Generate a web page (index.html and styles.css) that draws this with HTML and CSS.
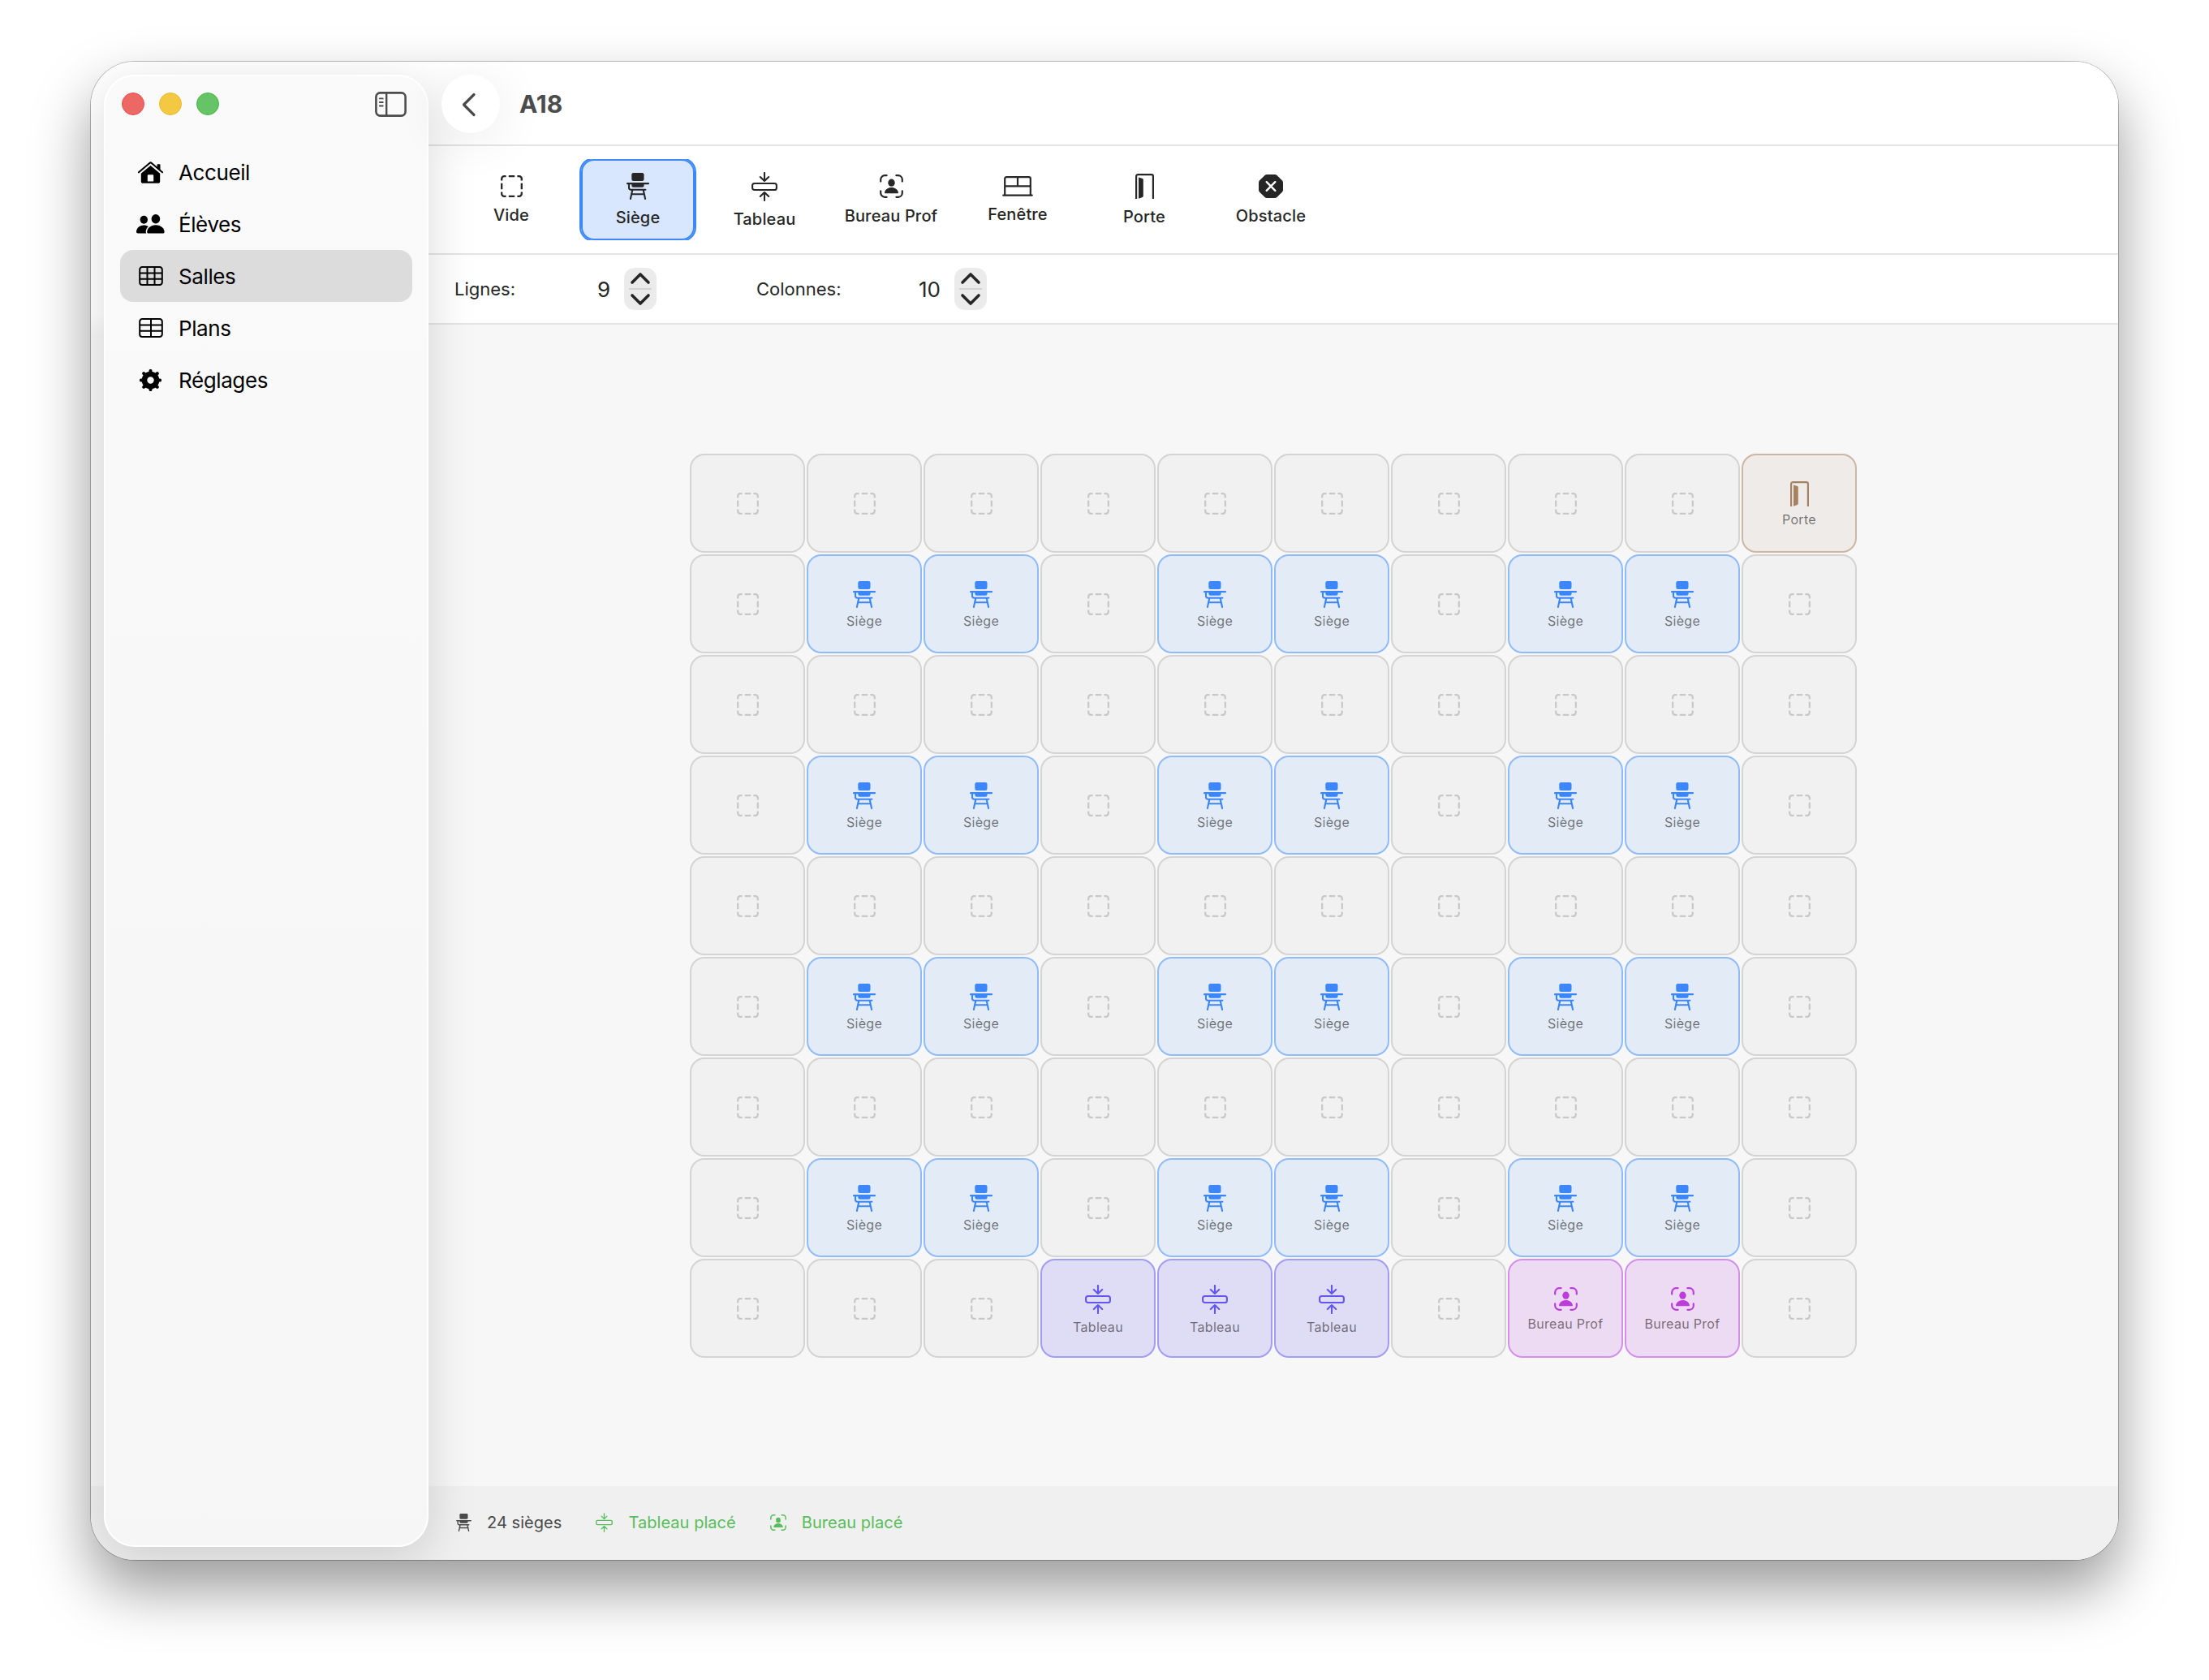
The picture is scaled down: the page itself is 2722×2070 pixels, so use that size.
FILE: index.html
```html
<!DOCTYPE html>
<html lang="fr">
<head>
    <meta charset="UTF-8">
    <meta name="viewport" content="width=device-width, initial-scale=1.0">
    <title>A18</title>
    <link rel="stylesheet" href="styles.css">
</head>
<body>
    <svg class="sprite" xmlns="http://www.w3.org/2000/svg">
        <symbol id="vide" viewBox="0 0 27 27">
            <path d="M1.2 6.6V4.2a3 3 0 0 1 3-3h2.4M20.4 1.2h2.4a3 3 0 0 1 3 3v2.4M25.8 20.4v2.4a3 3 0 0 1-3 3h-2.4M6.6 25.8H4.2a3 3 0 0 1-3-3v-2.4M9.8 1.2h7.4M9.8 25.8h7.4M1.2 9.8v7.4M25.8 9.8v7.4" fill="none" stroke="currentColor" stroke-width="2.3"/>
        </symbol>
        <symbol id="siege" viewBox="0 0 28 33">
            <rect x="6.3" y="0" width="15.2" height="10" rx="2.2"/>
            <path d="M1 12h26a1.1 1.1 0 0 1 0 2.3h-5.4v.9a2.5 2.5 0 0 1-2.5 2.5H8.8a2.5 2.5 0 0 1-2.5-2.5v-.9H1A1.1 1.1 0 0 1 1 12z"/>
            <path d="M3 13.5v5a2.2 2.2 0 0 0 2.2 2.2h18.2M7.3 21l-2.4 11M20.7 21l2.4 11M6.2 26.2h15.6" fill="none" stroke="currentColor" stroke-width="2.1" stroke-linecap="round"/>
        </symbol>
        <symbol id="tableau" viewBox="0 0 32 36">
            <path d="M16 1v9.6M10.8 6l5.2 5 5.2-5M16 35v-9.6M10.8 30l5.2-5 5.2 5" fill="none" stroke="currentColor" stroke-width="2.1" stroke-linecap="round" stroke-linejoin="round"/>
            <rect x="1.1" y="14" width="29.8" height="8" rx="2.6" fill="none" stroke="currentColor" stroke-width="2.1"/>
        </symbol>
        <symbol id="bureau" viewBox="0 0 29 29">
            <path d="M1.2 8.6V6.2a5 5 0 0 1 5-5h2.4M20.4 1.2h2.4a5 5 0 0 1 5 5v2.4M27.8 20.4v2.4a5 5 0 0 1-5 5h-2.4M8.6 27.8H6.2a5 5 0 0 1-5-5v-2.4" fill="none" stroke="currentColor" stroke-width="2.2" stroke-linecap="round"/>
            <ellipse cx="14.5" cy="10.2" rx="4.2" ry="4.6"/>
            <path d="M7 23.2c-.8 0-1.1-.5-.9-1.3C6.8 18.6 10.2 16 14.5 16s7.7 2.6 8.4 5.9c.2.8-.1 1.3-.9 1.3z"/>
        </symbol>
        <symbol id="fenetre" viewBox="0 0 38 25">
            <path d="M3.2 23V3.2a2 2 0 0 1 2-2h27.6a2 2 0 0 1 2 2V23M3.2 12.4h31.6M19 1.2v11.2M1.2 23.6h35.6" fill="none" stroke="currentColor" stroke-width="2.2" stroke-linecap="round"/>
        </symbol>
        <symbol id="porte" viewBox="0 0 23 31">
            <path d="M1.1 31V3.1a2 2 0 0 1 2-2h16.8a2 2 0 0 1 2 2V31" fill="none" stroke="currentColor" stroke-width="2.2"/>
            <path d="M4 4.5l4.8 1.6a1.5 1.5 0 0 1 1 1.4v20a1.5 1.5 0 0 1-1 1.4L4 30.7z"/>
        </symbol>
        <symbol id="obstacle" viewBox="0 0 30 29">
            <path d="M10.2 0h9.6a4 4 0 0 1 2.7 1.1l6.3 6.1A4 4 0 0 1 30 10v9a4 4 0 0 1-1.2 2.8l-6.3 6.1a4 4 0 0 1-2.7 1.1h-9.6a4 4 0 0 1-2.7-1.1l-6.3-6.1A4 4 0 0 1 0 19v-9a4 4 0 0 1 1.2-2.8l6.3-6.1A4 4 0 0 1 10.2 0z"/>
            <path d="M9.7 9.2l10.6 10.6M20.3 9.2L9.7 19.8" stroke="#fff" stroke-width="2.4" stroke-linecap="round"/>
        </symbol>
        <symbol id="accueil" viewBox="0 0 31 27">
            <path d="M1 13.3L14.6 1.8a1.5 1.5 0 0 1 1.9 0L30 13.3" fill="none" stroke="currentColor" stroke-width="2.1" stroke-linecap="round"/>
            <path d="M24.4 3.2h2.3a.8.8 0 0 1 .8.8v6.8l-3.9-3.3V4a.8.8 0 0 1 .8-.8z"/>
            <path d="M15.5 4.9l11.7 9.9v9.4a2.6 2.6 0 0 1-2.6 2.6H6.4a2.6 2.6 0 0 1-2.6-2.6v-9.4zM12.6 16.2a.8.8 0 0 0-.8.8v7.6h7.4V17a.8.8 0 0 0-.8-.8z" fill-rule="evenodd"/>
        </symbol>
        <symbol id="eleves" viewBox="0 0 35 24">
            <ellipse cx="9.3" cy="6.8" rx="4.7" ry="5"/>
            <path d="M2 23.6c-1.4 0-2-.7-2-2 0-4.2 3.6-8.2 9.2-8.2 2.4 0 4.3.7 5.7 1.7-2.3 2-3.4 4.7-3.2 7 .1.6.3 1.1.7 1.5z"/>
            <ellipse cx="23.9" cy="5.7" rx="5.3" ry="5.7"/>
            <path d="M15.6 23.6c-1.7 0-2.4-.6-2.4-1.9 0-3.7 4.1-8.4 10.7-8.4s10.7 4.7 10.7 8.4c0 1.3-.7 1.9-2.4 1.9z"/>
        </symbol>
        <symbol id="salles" viewBox="0 0 30 24">
            <path d="M4.2 1.1h21.6a3 3 0 0 1 3 3v15.8a3 3 0 0 1-3 3H4.2a3 3 0 0 1-3-3V4.1a3 3 0 0 1 3-3zM1.2 8.5h27.6M1.2 15.7h27.6M10.5 1.1v21.8M19.5 1.1v21.8" fill="none" stroke="currentColor" stroke-width="2"/>
        </symbol>
        <symbol id="plans" viewBox="0 0 30 24">
            <path d="M4.2 1.1h21.6a3 3 0 0 1 3 3v15.8a3 3 0 0 1-3 3H4.2a3 3 0 0 1-3-3V4.1a3 3 0 0 1 3-3zM1.2 8.5h27.6M1.2 15.7h27.6M15 1.1v21.8" fill="none" stroke="currentColor" stroke-width="2"/>
        </symbol>
        <symbol id="reglages" viewBox="0 0 27 27">
            <circle cx="13.5" cy="13.5" r="7.5" fill="none" stroke="currentColor" stroke-width="6.6"/>
            <path d="M13.5 1.9v4M13.5 25.1v-4M1.9 13.5h4M25.1 13.5h-4M5.2 5.2L8 8M21.8 21.8L19 19M5.2 21.8L8 19M21.8 5.2L19 8" stroke="currentColor" stroke-width="4" stroke-linecap="round"/>
        </symbol>
        <symbol id="volet" viewBox="0 0 39 31">
            <rect x="1.4" y="1.4" width="36.2" height="28.2" rx="5" fill="none" stroke="currentColor" stroke-width="2.6"/>
            <path d="M14.2 1.4v28.2" stroke="currentColor" stroke-width="2.4"/>
            <path d="M5.8 8.4h4M5.8 13h4M5.8 17.5h4" stroke="currentColor" stroke-width="1.8" stroke-linecap="round"/>
        </symbol>
    </svg>

    <div class="window">
        <aside class="sidebar">
            <div class="titlebar">
                <span class="dot red"></span>
                <span class="dot yellow"></span>
                <span class="dot green"></span>
                <svg class="toggle"><use href="#volet"/></svg>
            </div>
            <nav class="menu">
                <a class="menu-item"><span class="menu-icon"><svg class="i-accueil"><use href="#accueil"/></svg></span>Accueil</a>
                <a class="menu-item"><span class="menu-icon"><svg class="i-eleves"><use href="#eleves"/></svg></span>Élèves</a>
                <a class="menu-item active"><span class="menu-icon"><svg class="i-table"><use href="#salles"/></svg></span>Salles</a>
                <a class="menu-item"><span class="menu-icon"><svg class="i-table"><use href="#plans"/></svg></span>Plans</a>
                <a class="menu-item"><span class="menu-icon"><svg class="i-reglages"><use href="#reglages"/></svg></span>Réglages</a>
            </nav>
        </aside>

        <main class="main">
            <header class="header">
                <button class="back" type="button">
                    <svg width="20" height="30" viewBox="0 0 20 30"><path d="M16 2.5L3.5 15 16 27.5" fill="none" stroke="currentColor" stroke-width="3.2" stroke-linecap="round" stroke-linejoin="round"/></svg>
                </button>
                <h1>A18</h1>
            </header>

            <div class="tools">
                <div class="tool"><svg class="i-vide"><use href="#vide"/></svg>Vide</div>
                <div class="tool selected"><svg class="i-siege"><use href="#siege"/></svg>Siège</div>
                <div class="tool"><svg class="i-tableau"><use href="#tableau"/></svg>Tableau</div>
                <div class="tool"><svg class="i-bureau"><use href="#bureau"/></svg>Bureau Prof</div>
                <div class="tool"><svg class="i-fenetre"><use href="#fenetre"/></svg>Fenêtre</div>
                <div class="tool"><svg class="i-porte"><use href="#porte"/></svg>Porte</div>
                <div class="tool"><svg class="i-obstacle"><use href="#obstacle"/></svg>Obstacle</div>
            </div>

            <div class="size">
                <div class="field lignes">
                    <span class="label">Lignes:</span>
                    <span class="value">9</span>
                    <div class="stepper">
                        <svg width="26" height="16" viewBox="0 0 26 16"><path d="M3 13L13 3l10 10"/></svg>
                        <svg width="26" height="16" viewBox="0 0 26 16"><path d="M3 3l10 10L23 3"/></svg>
                    </div>
                </div>
                <div class="field colonnes">
                    <span class="label">Colonnes:</span>
                    <span class="value">10</span>
                    <div class="stepper">
                        <svg width="26" height="16" viewBox="0 0 26 16"><path d="M3 13L13 3l10 10"/></svg>
                        <svg width="26" height="16" viewBox="0 0 26 16"><path d="M3 3l10 10L23 3"/></svg>
                    </div>
                </div>
            </div>

            <div class="room">
                <div class="grid" id="grid"></div>
            </div>

            <footer class="status">
                <span class="status-item"><svg class="s-siege"><use href="#siege"/></svg>24 sièges</span>
                <span class="status-item ok"><svg class="s-tableau"><use href="#tableau"/></svg>Tableau placé</span>
                <span class="status-item ok"><svg class="s-bureau"><use href="#bureau"/></svg>Bureau placé</span>
            </footer>
        </main>
    </div>

    <script src="script.js"></script>
</body>
</html>
```
FILE: styles.css
```css
* {
    box-sizing: border-box;
}
body {
    margin: 0;
    padding: 76px 112px 148px;
    height: 2070px;
    background: #fff;
    font-family: Inter, "Liberation Sans", sans-serif;
    color: #262626;
}
svg {
    display: block;
    flex: none;
    fill: currentColor;
}
.sprite {
    position: absolute;
    width: 0;
    height: 0;
}
.window {
    display: flex;
    height: 1846px;
    border-radius: 54px;
    overflow: clip;
    background: linear-gradient(#fff 310px, #f7f7f7 336px, #f7f7f7 1755px, #f0f0f0 1755px);
    box-shadow: 0 0 0 1px rgba(0, 0, 0, 0.25), 0 36px 72px rgba(0, 0, 0, 0.4);
}

/* sidebar */
.sidebar {
    position: relative;
    z-index: 1;
    width: 400px;
    margin: 16px 0 16px 16px;
    padding: 20px 18px;
    border: 2px solid #fff;
    border-radius: 38px;
    background: linear-gradient(#fafafa, #f9f9f9 20%, #f6f6f6);
    box-shadow: 0 14px 60px rgba(0, 0, 0, 0.15);
}
.titlebar {
    display: flex;
    align-items: center;
    gap: 18px;
    height: 28px;
    padding: 0 7px 0 2px;
}
.dot {
    width: 28px;
    height: 28px;
    border-radius: 50%;
    border: 1px solid;
}
.red {
    background: #ed6765;
    border-color: #e2504e;
}
.yellow {
    background: #f3c944;
    border-color: #e9b92c;
}
.green {
    background: #66c366;
    border-color: #4cb24e;
}
.toggle {
    width: 39px;
    height: 31px;
    margin-left: auto;
    color: #4c4c4c;
}
.menu {
    margin-top: 38px;
}
.menu-item {
    display: flex;
    align-items: center;
    height: 64px;
    padding-left: 14px;
    border-radius: 16px;
    font-size: 26px;
    letter-spacing: -0.4px;
    color: #000;
}
.menu-item.active {
    background: #dcdcdc;
}
.menu-icon {
    display: flex;
    justify-content: center;
    width: 47px;
    margin-right: 11px;
}
.i-accueil { width: 31px; height: 27px; }
.i-eleves { width: 35px; height: 24px; }
.i-table { width: 30px; height: 24px; }
.i-reglages { width: 27px; height: 27px; }

/* header */
.main {
    flex: 1;
    display: flex;
    flex-direction: column;
    background: linear-gradient(#fff 323px, #f7f7f7 323px, #f7f7f7 1755px, #f0f0f0 1755px);
}
.header {
    display: flex;
    align-items: center;
    height: 104px;
    padding: 2px 0 0 16px;
    border-bottom: 2px solid #e4e4e4;
}
.back {
    position: relative;
    z-index: 2;
    display: flex;
    align-items: center;
    justify-content: center;
    width: 72px;
    height: 72px;
    padding: 1px 4px 0 0;
    border: none;
    border-radius: 50%;
    background: #fff;
    color: #4a4a4a;
    box-shadow: 0 8px 64px rgba(0, 0, 0, 0.09);
}
h1 {
    margin: 0 0 0 24px;
    font-size: 30px;
    font-weight: 700;
    letter-spacing: -0.1px;
    color: #4c4c4c;
}

/* tools */
.tools {
    display: flex;
    gap: 16px;
    height: 134px;
    padding: 16px 32px;
    border-bottom: 2px solid #e4e4e4;
}
.tool {
    display: flex;
    flex-direction: column;
    align-items: center;
    justify-content: center;
    gap: 12px;
    width: 140px;
    height: 100px;
    border-radius: 16px;
    font-size: 20px;
    font-weight: 500;
    line-height: 21px;
    letter-spacing: 0.15px;
}
.tool.selected {
    background: #d8e6fe;
    box-shadow: 0 0 0 2px #3b88fa, inset 0 0 0 2px #3b88fa;
    clip-path: inset(0 -2px);
}
.i-vide { width: 27px; height: 27px; }
.i-siege { width: 28px; height: 33px; }
.i-tableau { width: 32px; height: 36px; }
.i-bureau { width: 29px; height: 29px; }
.i-fenetre { width: 38px; height: 25px; }
.i-porte { width: 23px; height: 31px; }
.i-obstacle { width: 30px; height: 29px; }

/* room size */
.size {
    display: flex;
    gap: 123px;
    height: 86px;
    padding-left: 32px;
    border-bottom: 2px solid #e4e4e4;
}
.field {
    display: flex;
    align-items: center;
}
.lignes {
    width: 249px;
}
.colonnes {
    width: 284px;
}
.label {
    font-size: 22px;
}
.value {
    margin-left: auto;
    font-size: 26px;
}
.stepper {
    display: flex;
    flex-direction: column;
    align-items: center;
    justify-content: space-between;
    width: 40px;
    height: 52px;
    margin-left: 17px;
    padding: 5px 0;
    border-radius: 13px;
    background: linear-gradient(#d4d4d4, #d4d4d4) center / 28px 2px no-repeat #ebebeb;
}
.stepper svg {
    fill: none;
    stroke: #262626;
    stroke-width: 3.6;
    stroke-linecap: round;
    stroke-linejoin: round;
}

/* room */
.room {
    flex: 1;
    display: flex;
    align-items: center;
    justify-content: center;
}
.grid {
    display: grid;
    grid-template-columns: repeat(10, 142px);
    grid-auto-rows: 122px;
    gap: 2px;
    margin-top: 1px;
}
.cell {
    display: flex;
    flex-direction: column;
    align-items: center;
    justify-content: center;
    gap: 9px;
    border: 2px solid #d4d4d4;
    border-radius: 18px;
    background: #f1f1f1;
    font-size: 16px;
    line-height: 14px;
    letter-spacing: 0.3px;
}
.cell span {
    color: rgba(0, 0, 0, 0.53);
}
.cell.vide {
    color: #c8c8c8;
}
.cell.siege {
    background: #e3ebf7;
    border-color: #8fbbfa;
    color: #3b87f9;
}
.cell.tableau {
    background: #dfdcf5;
    border-color: #a39cf4;
    color: #6157ef;
}
.cell.bureau {
    background: #eddaf3;
    border-color: #d48fe9;
    color: #bd3cdc;
}
.cell.porte {
    background: #eeebe8;
    border-color: #cdb6a3;
    color: #a78262;
}

/* status bar */
.status {
    display: flex;
    align-items: center;
    height: 91px;
    padding: 0 0 2px 34px;
    font-size: 20px;
    color: #4a4a4a;
}
.status-item {
    display: flex;
    align-items: center;
    gap: 19px;
    margin-right: 42px;
    letter-spacing: 0.05px;
}
.status-item.ok {
    color: #58bd5b;
}
.s-siege { width: 19px; height: 22px; }
.s-tableau { width: 21px; height: 24px; }
.s-bureau { width: 20px; height: 20px; }
```
FILE: script.js
```js
const plan = [
    '.........P',
    '.SS.SS.SS.',
    '..........',
    '.SS.SS.SS.',
    '..........',
    '.SS.SS.SS.',
    '..........',
    '.SS.SS.SS.',
    '...TTT.BB.'
];

const types = {
    '.': { id: 'vide', label: '' },
    'S': { id: 'siege', label: 'Siège' },
    'T': { id: 'tableau', label: 'Tableau' },
    'B': { id: 'bureau', label: 'Bureau Prof' },
    'P': { id: 'porte', label: 'Porte' }
};

let html = '';
plan.forEach(row => {
    row.split('').forEach(c => {
        const type = types[c];
        const label = type.label ? `<span>${type.label}</span>` : '';
        html += `<div class="cell ${type.id}"><svg class="i-${type.id}"><use href="#${type.id}"/></svg>${label}</div>`;
    });
});
document.getElementById('grid').innerHTML = html;
```
